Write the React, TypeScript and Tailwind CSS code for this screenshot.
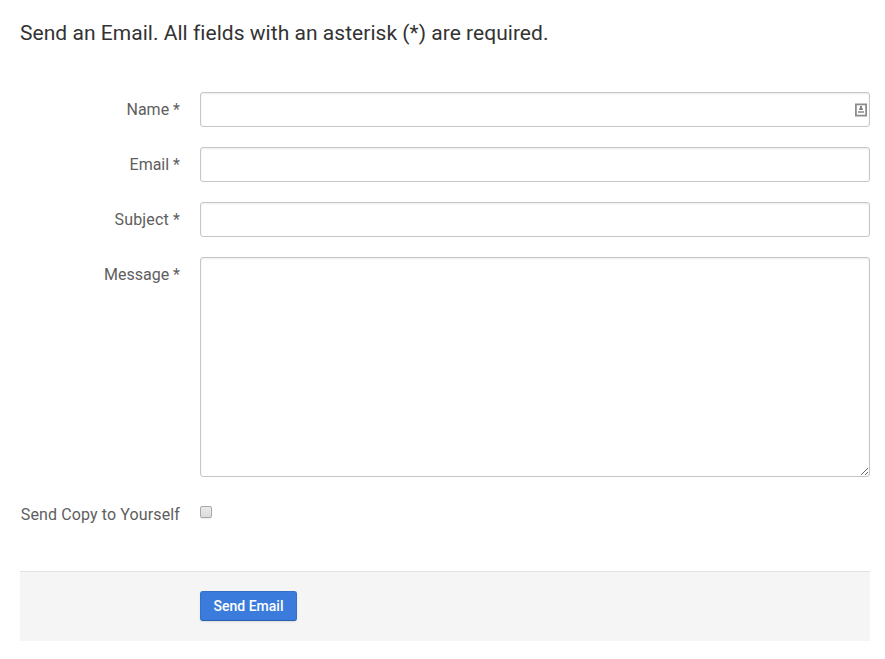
const inputClass =
  "block w-full rounded-[3px] border border-[#c6c6c6] bg-white shadow-[inset_0_1px_2px_rgba(0,0,0,0.08)] outline-none";

const labelClass = "mr-5 w-40 shrink-0 whitespace-nowrap pt-1.5 text-right leading-6";

function ContactCardIcon() {
  return (
    <svg className="absolute right-[3px] top-[11px]" width="12" height="14" viewBox="0 0 12 14">
      <rect x="0.9" y="1.4" width="10.2" height="11.2" fill="#fff" stroke="#8c8c8c" strokeWidth="1.8" />
      <path d="M5 3h2v2.5h1V7H4V5.5h1z" fill="#808080" />
      <path d="M3 8h6v2H3z" fill="#a5a5a5" />
    </svg>
  );
}

function Field({ label, id, spacing = "", icon }: { label: string; id: string; spacing?: string; icon?: boolean }) {
  return (
    <div className="mb-5 flex h-[35px]">
      <label htmlFor={id} className={labelClass + " " + spacing}>
        {label}
      </label>
      <div className="relative w-[670px]">
        <input id={id} type="text" className={inputClass + " h-[35px] px-2"} />
        {icon && <ContactCardIcon />}
      </div>
    </div>
  );
}

export default function App() {
  return (
    <main className="h-[659px] w-[885px] bg-white pl-5 pr-[15px] pt-[17px] font-['Roboto',sans-serif] text-base text-[#5e5e5e]">
      <h1 className="mb-[43px] h-8 whitespace-nowrap text-[21px] leading-8 tracking-[0.035px] text-[#333]">
        Send an Email. All fields with an asterisk (*) are required.
      </h1>
      <form onSubmit={(e) => e.preventDefault()}>
        <Field label="Name *" id="name" icon />
        <Field label="Email *" id="email" />
        <Field label="Subject *" id="subject" spacing="tracking-[0.15px]" />
        <div className="flex h-[220px]">
          <label htmlFor="message" className={labelClass}>
            Message *
          </label>
          <textarea id="message" className={inputClass + " h-[220px] resize-y"} />
        </div>
        <div className="mt-5 flex h-[35px]">
          <label htmlFor="copy" className={labelClass + " tracking-[0.12px]"}>
            Send Copy to Yourself
          </label>
          <input
            id="copy"
            type="checkbox"
            className="mt-[9px] h-[12px] w-[12px] appearance-none rounded-[2px] border border-[#a8a8a8] bg-gradient-to-b from-[#eaeaea] to-[#dcdcdc] shadow-[0_1px_1px_rgba(0,0,0,0.08)]"
          />
        </div>
        <div className="mt-[39px] h-[70px] border-t border-[#e2e2e2] bg-[#f5f5f5] pl-[180px] pt-[19px]">
          <button className="block h-[30px] w-[97px] rounded-[3px] border border-[#3570c8] border-b-[#2b60b0] bg-[#3a7bdb] text-sm font-medium text-white shadow-[0_1px_2px_rgba(0,0,0,0.1)]">
            Send Email
          </button>
        </div>
      </form>
    </main>
  );
}
